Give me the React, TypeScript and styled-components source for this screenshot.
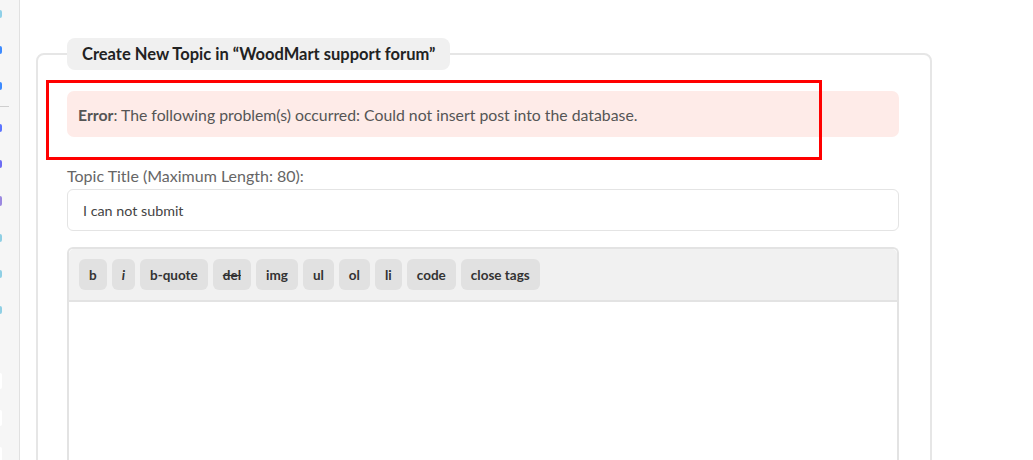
import React from 'react';
import styled, { createGlobalStyle } from 'styled-components';

const GlobalStyle = createGlobalStyle`
  html, body {
    margin: 0;
    padding: 0;
    background: #ffffff;
    font-family: Lato, "Open Sans", sans-serif;
  }
  * {
    box-sizing: border-box;
  }
`;

const Page = styled.div`
  display: flex;
  min-height: 100vh;
  overflow: hidden;
  position: relative;
`;

const Sidebar = styled.aside`
  width: 20px;
  flex: 0 0 20px;
  background: #f6f6f6;
  border-right: 1px solid #e1e1e1;
  padding-top: 10px;
  display: flex;
  flex-direction: column;
`;

const MarkGroup = styled.div`
  display: flex;
  flex-direction: column;
  gap: 28px;
`;

const Mark = styled.span<{ $color: string; $h?: number }>`
  display: block;
  width: 2px;
  height: ${(p) => p.$h ?? 8}px;
  background: ${(p) => p.$color};
  border-radius: 0 2px 2px 0;
`;

const SideDivider = styled.hr`
  width: 9px;
  margin: 16px 0 17px 0;
  border: 0;
  border-top: 1px solid #cfcfcf;
`;

const FaintGroup = styled.div`
  display: flex;
  flex-direction: column;
  gap: 21px;
  margin-top: 59px;
`;

const Main = styled.main`
  flex: 1;
  padding: 38px 0 0 16px;
  position: relative;
`;

const Fieldset = styled.fieldset`
  width: 896px;
  margin: 0;
  border: 2px solid #e6e6e6;
  border-radius: 8px;
  padding: 0 31px 0 29px;
  min-width: 0;
`;

const Legend = styled.legend`
  padding: 0 15px;
  height: 32px;
  line-height: 32px;
  background: #f0f0f0;
  border-radius: 8px;
  font-size: 16.5px;
  font-weight: 700;
  color: #222222;
`;

const ErrorBox = styled.div`
  margin-top: 21px;
  height: 46px;
  display: flex;
  align-items: center;
  padding: 0 11px;
  background: #feebe8;
  border-radius: 7px;
  font-size: 15.8px;
  color: #555555;

  strong {
    font-weight: 700;
  }
`;

const Annotation = styled.div`
  position: absolute;
  left: 26px;
  top: 80px;
  width: 776px;
  height: 80px;
  border: 3px solid #ff0000;
  pointer-events: none;
`;

const FieldLabel = styled.label`
  display: block;
  margin-top: 28px;
  margin-bottom: 2px;
  line-height: 22px;
  font-size: 16px;
  color: #666666;
`;

const TextInput = styled.div`
  height: 42px;
  display: flex;
  align-items: center;
  padding: 0 15px;
  border: 1px solid #e4e4e4;
  border-radius: 6px;
  font-size: 14.3px;
  color: #444444;
`;

const Editor = styled.div`
  margin-top: 16px;
  border: 2px solid #e3e3e3;
  border-bottom: 0;
  border-radius: 6px 6px 0 0;
`;

const Toolbar = styled.div`
  display: flex;
  gap: 5px;
  padding: 10px 10px;
  background: #f1f1f1;
  border-bottom: 2px solid #e3e3e3;
  border-radius: 5px 5px 0 0;
`;

const ToolButton = styled.button<{ $italic?: boolean; $strike?: boolean }>`
  height: 31px;
  padding: 0 10px;
  border: 0;
  border-radius: 6px;
  background: #e1e1e1;
  font-family: Lato, "Open Sans", sans-serif;
  font-size: 13.5px;
  font-weight: 700;
  color: #333333;
  font-style: ${(p) => (p.$italic ? 'italic' : 'normal')};
  text-decoration: ${(p) => (p.$strike ? 'line-through' : 'none')};
`;

const TextArea = styled.div`
  height: 220px;
  background: #ffffff;
`;

const buttons = [
  { label: 'b' },
  { label: 'i', italic: true },
  { label: 'b-quote' },
  { label: 'del', strike: true },
  { label: 'img' },
  { label: 'ul' },
  { label: 'ol' },
  { label: 'li' },
  { label: 'code' },
  { label: 'close tags' }
];

export default function App() {
  return (
    <>
      <GlobalStyle />
      <Page>
        <Sidebar>
          <MarkGroup>
            <Mark $color="#8fd0e8" />
            <Mark $color="#3d8bff" />
            <Mark $color="#3d8bff" />
          </MarkGroup>
          <SideDivider />
          <MarkGroup>
            <Mark $color="#5b74ff" />
            <Mark $color="#6d6cf3" />
            <Mark $color="#9b88e0" $h={10} />
            <Mark $color="#8fcfe4" />
            <Mark $color="#8fcfe4" />
            <Mark $color="#8fcfe4" />
          </MarkGroup>
          <FaintGroup>
            <Mark $color="#ffffff" $h={16} />
            <Mark $color="#ffffff" $h={16} />
            <Mark $color="#ffffff" $h={16} />
          </FaintGroup>
        </Sidebar>
        <Main>
          <Fieldset>
            <Legend>Create New Topic in “WoodMart support forum”</Legend>
            <ErrorBox>
              <span>
                <strong>Error</strong>: The following problem(s) occurred: Could not insert post into the database.
              </span>
            </ErrorBox>
            <FieldLabel>Topic Title (Maximum Length: 80):</FieldLabel>
            <TextInput>I can not submit</TextInput>
            <Editor>
              <Toolbar>
                {buttons.map((b) => (
                  <ToolButton key={b.label} $italic={b.italic} $strike={b.strike}>
                    {b.label}
                  </ToolButton>
                ))}
              </Toolbar>
              <TextArea />
            </Editor>
          </Fieldset>
          <Annotation />
        </Main>
      </Page>
    </>
  );
}
